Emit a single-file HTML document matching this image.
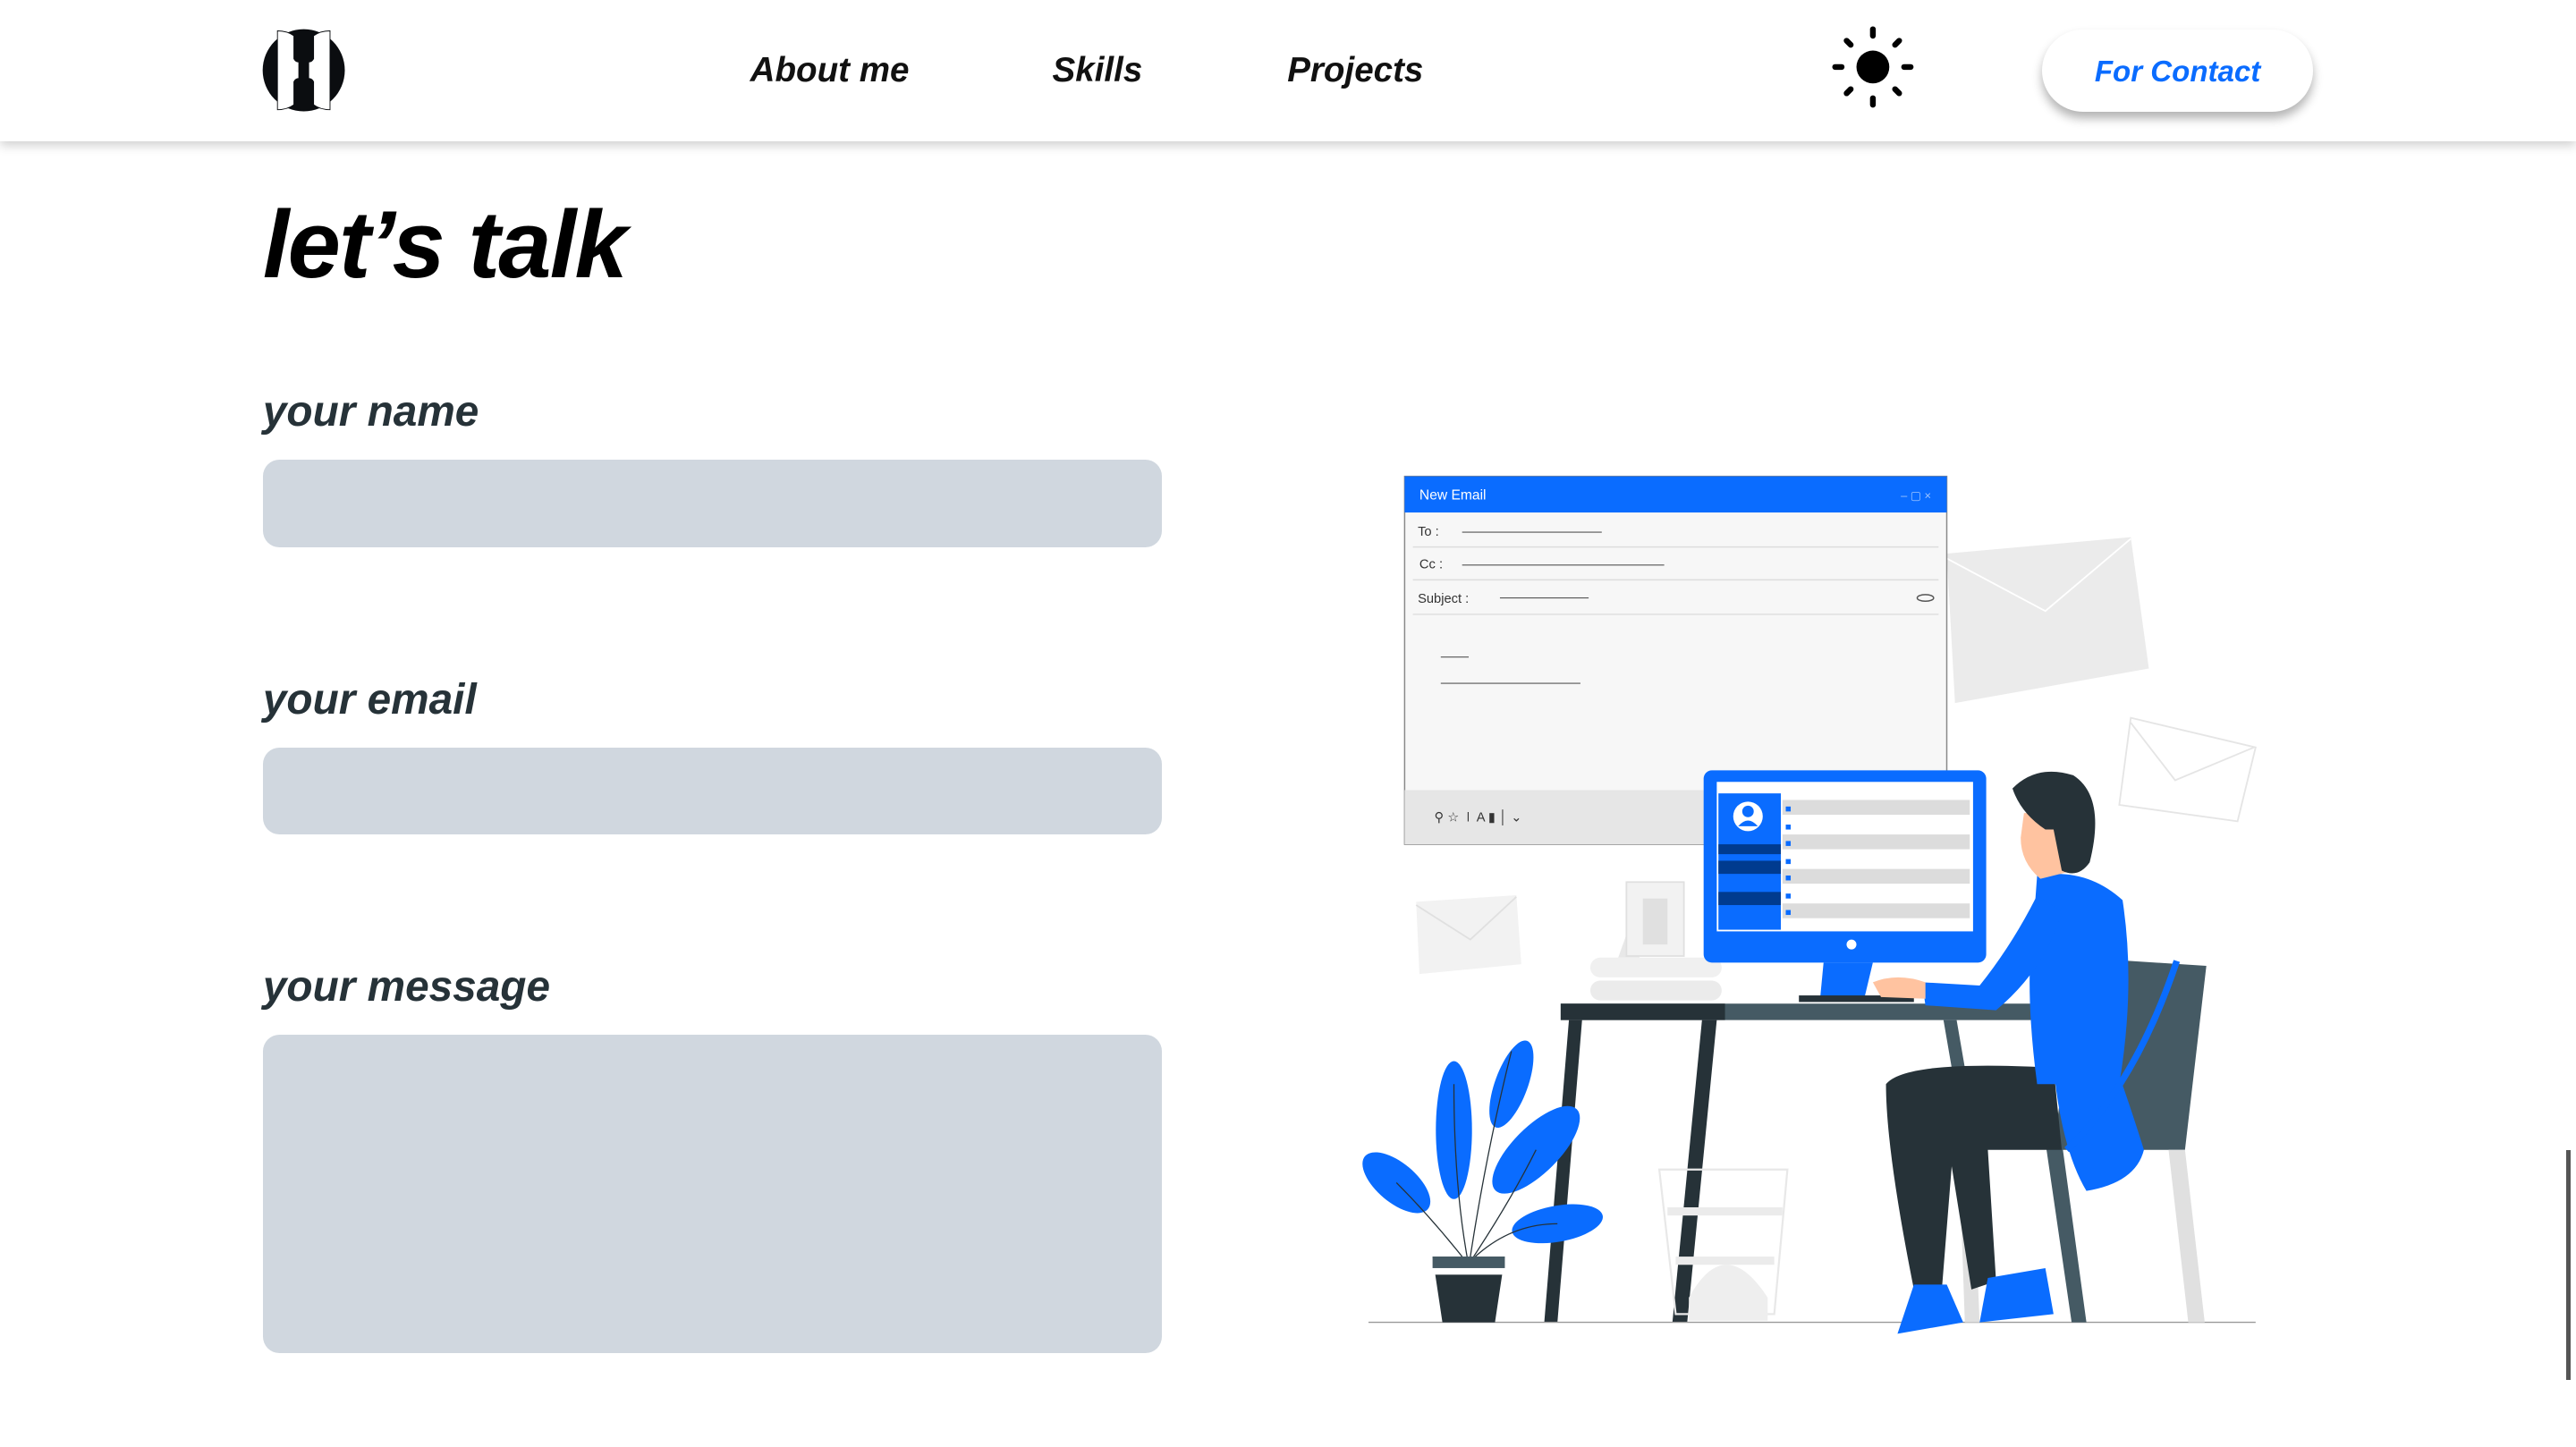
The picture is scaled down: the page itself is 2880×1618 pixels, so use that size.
<!DOCTYPE html>
<html><head><meta charset="utf-8">
<style>
html,body{margin:0;padding:0;background:#fff;overflow:hidden}
#w{zoom:1.83673;width:1568px;height:881px;position:relative;font-family:"Liberation Sans",sans-serif}
.hd{position:absolute;left:0;top:0;width:1568px;height:86px;background:#fff;box-shadow:0 3px 6px rgba(0,0,0,.18)}
.nav{position:absolute;top:31px;font-weight:bold;font-style:italic;font-size:21px;color:#111;transform:translateX(-50%)}
.btn{position:absolute;left:1243px;top:18px;width:165px;height:50px;border-radius:25px;background:#fff;box-shadow:0 4px 6px rgba(0,0,0,.3);color:#0a6cff;font-weight:bold;font-style:italic;font-size:18px;text-align:center;line-height:52px}
h1{position:absolute;left:160px;top:116px;margin:0;font-size:58px;font-weight:bold;font-style:italic;color:#000;letter-spacing:-1px}
.lb{position:absolute;left:160px;font-size:26px;font-weight:bold;font-style:italic;color:#263238}
.in{position:absolute;left:160px;width:547px;background:#d0d7df;border-radius:10px}
</style></head><body><div id="w">
<div class="hd"></div>
<svg style="position:absolute;left:158px;top:16px" width="54" height="54" viewBox="0 0 54 54">
<circle cx="27" cy="27" r="25" fill="#0b0d10"/>
<path d="M11 3 Q17 3 21 6 L21 20 Q22 22 24 22 L24 32 Q22 32 21 34 L21 48 Q17 51 11 51 Z" fill="#fff" stroke="#0b0d10" stroke-width="0.5"/>
<path d="M43 3 Q37 3 33 6 L33 20 Q32 22 30 22 L30 32 Q32 32 33 34 L33 48 Q37 51 43 51 Z" fill="#fff" stroke="#0b0d10" stroke-width="0.5"/>
</svg>
<div class="nav" style="left:505px">About me</div>
<div class="nav" style="left:668px">Skills</div>
<div class="nav" style="left:825px">Projects</div>
<svg style="position:absolute;left:1115px;top:16px" width="50" height="50" viewBox="0 0 50 50">
<circle cx="25" cy="25" r="10" fill="#000"/>
<g stroke="#000" stroke-width="3.5" stroke-linecap="round">
<line x1="25" y1="2" x2="25" y2="6"/><line x1="25" y1="44" x2="25" y2="48"/>
<line x1="2" y1="25" x2="6" y2="25"/><line x1="44" y1="25" x2="48" y2="25"/>
<line x1="9" y1="9" x2="11.5" y2="11.5"/><line x1="38.5" y1="38.5" x2="41" y2="41"/>
<line x1="41" y1="9" x2="38.5" y2="11.5"/><line x1="9" y1="41" x2="11.5" y2="38.5"/>
</g></svg>
<div class="btn">For Contact</div>
<h1>let’s talk</h1>
<div class="lb" style="top:236px">your name</div>
<div class="in" style="top:280px;height:53px"></div>
<div class="lb" style="top:411px">your email</div>
<div class="in" style="top:455px;height:53px"></div>
<div class="lb" style="top:586px">your message</div>
<div class="in" style="top:630px;height:194px"></div>
<div style="position:absolute;left:1562px;top:700px;width:3px;height:140px;background:#555"></div>

<svg style="position:absolute;left:0;top:0" width="1568" height="881" viewBox="0 0 1568 881">
<polygon points="1185,337 1297,327 1308,407 1190,428" fill="#ebebeb"/>
<polyline points="1185,340 1245,372 1297,328" fill="none" stroke="#fff" stroke-width="1"/>
<polygon points="1297,437 1373,455 1362,500 1290,490" fill="#fff" stroke="#e5e5e5"/>
<polyline points="1297,440 1324,475 1372,455" fill="none" stroke="#e5e5e5"/>
<polygon points="862,549 923,545 926,587 864,593" fill="#f2f2f2"/>
<polyline points="862,551 895,572 923,546" fill="none" stroke="#e0e0e0"/>
<rect x="855" y="290" width="330" height="224" fill="#f7f7f7" stroke="#888" stroke-width="0.8"/>
<rect x="855" y="290" width="330" height="22" fill="#0a6cff"/>
<text x="864" y="304" font-size="8.5" fill="#fff" font-family="Liberation Sans">New Email</text>
<text x="1157" y="304" font-size="7" fill="#9cc3ff" font-family="Liberation Sans">– ▢ ×</text>
<g font-size="8" fill="#333" font-family="Liberation Sans"><text x="863" y="326">To :</text><text x="864" y="346">Cc :</text><text x="863" y="367">Subject :</text></g>
<g stroke="#ddd" stroke-width="0.8"><line x1="860" y1="333" x2="1180" y2="333"/><line x1="860" y1="353" x2="1180" y2="353"/><line x1="860" y1="374" x2="1180" y2="374"/></g>
<g stroke="#555" stroke-width="0.6"><line x1="890" y1="324" x2="975" y2="324"/><line x1="890" y1="344" x2="1013" y2="344"/><line x1="913" y1="364" x2="967" y2="364"/><line x1="877" y1="400" x2="894" y2="400"/><line x1="877" y1="416" x2="962" y2="416"/></g>
<ellipse cx="1172" cy="364" rx="5" ry="2" fill="none" stroke="#555" stroke-width="0.8"/>
<rect x="855" y="481" width="330" height="33" fill="#e6e6e6"/>
<text x="873" y="500" font-size="8" fill="#333">⚲ ☆ 𝍷 A ▮ │ ⌄</text>
<rect x="968" y="583" width="80" height="12" rx="6" fill="#f0f0f0"/>
<rect x="968" y="597" width="80" height="12" rx="6" fill="#ebebeb"/>
<polygon points="985,583 995,555 998,583" fill="#e8e8e8"/>
<rect x="990" y="537" width="35" height="45" fill="#f2f2f2" stroke="#e0e0e0"/>
<rect x="1000" y="547" width="15" height="28" fill="#e0e0e0"/>
<rect x="1037" y="469" width="172" height="117" rx="5" fill="#0a6cff"/>
<rect x="1045" y="476" width="156" height="91" fill="#fff"/>
<rect x="1046" y="483" width="38" height="83" fill="#0a6cff"/>
<g fill="#003b8f"><rect x="1046" y="514" width="38" height="6"/><rect x="1046" y="524" width="38" height="8"/><rect x="1046" y="543" width="38" height="8"/></g>
<circle cx="1064" cy="497" r="9" fill="#fff"/><circle cx="1064" cy="494" r="3.5" fill="#0a6cff"/><path d="M1058 503 Q1064 496 1070 503Z" fill="#0a6cff"/>
<g fill="#dcdcdc"><rect x="1085" y="487" width="114" height="9"/><rect x="1085" y="508" width="114" height="9"/><rect x="1085" y="529" width="114" height="9"/><rect x="1085" y="550" width="114" height="9"/></g>
<g fill="#0a6cff"><rect x="1087" y="491" width="3" height="3"/><rect x="1087" y="502" width="3" height="3"/><rect x="1087" y="512" width="3" height="3"/><rect x="1087" y="523" width="3" height="3"/><rect x="1087" y="533" width="3" height="3"/><rect x="1087" y="544" width="3" height="3"/><rect x="1087" y="554" width="3" height="3"/></g>
<circle cx="1127" cy="575" r="3" fill="#fff"/>
<path d="M1110 586 L1140 586 L1135 607 L1108 607Z" fill="#0a6cff"/>
<rect x="1095" y="606" width="70" height="4" fill="#263238"/>
<rect x="950" y="611" width="290" height="10" fill="#455a64"/>
<rect x="950" y="611" width="100" height="10" fill="#263238"/>
<polygon points="955,621 963,621 948,805 940,805" fill="#263238"/>
<polygon points="1036,621 1045,621 1027,805 1018,805" fill="#263238"/>
<polygon points="1183,621 1191,621 1196,650 1188,650" fill="#455a64"/>
<polygon points="1010,712 1088,712 1080,800 1020,800" fill="none" stroke="#e8e8e8" stroke-width="1.2"/>
<rect x="1015" y="735" width="70" height="5" fill="#ebebeb"/><rect x="1020" y="765" width="60" height="5" fill="#ebebeb"/>
<path d="M1028 790 Q1050 750 1076 790 L1076 804 L1028 804Z" fill="#eeeeee"/>
<line x1="833" y1="805" x2="1373" y2="805" stroke="#999" stroke-width="0.8"/>
<g fill="#0a6cff">
<ellipse cx="885" cy="688" rx="11" ry="42"/>
<ellipse cx="920" cy="660" rx="10" ry="28" transform="rotate(20 920 660)"/>
<ellipse cx="935" cy="700" rx="14" ry="35" transform="rotate(45 935 700)"/>
<ellipse cx="850" cy="720" rx="12" ry="25" transform="rotate(-50 850 720)"/>
<ellipse cx="948" cy="745" rx="28" ry="11" transform="rotate(-10 948 745)"/>
</g>
<g stroke="#263238" stroke-width="0.7" fill="none"><path d="M893 765 Q885 720 885 660"/><path d="M895 765 Q905 700 920 640"/><path d="M897 765 Q920 730 935 700"/><path d="M890 765 Q870 740 850 720"/><path d="M898 765 Q920 745 948 745"/></g>
<polygon points="872,765 916,765 910,805 878,805" fill="#263238"/>
<rect x="872" y="765" width="44" height="7" fill="#455a64"/><rect x="873" y="772" width="42" height="4" fill="#fff"/>
<polygon points="1265,583 1343,588 1330,700 1250,700" fill="#455a64"/>
<polygon points="1320,700 1330,700 1342,805 1332,805" fill="#e0e0e0"/>
<polygon points="1190,685 1260,690 1260,700 1190,695" fill="#455a64"/>
<polygon points="1192,690 1200,690 1205,805 1196,805" fill="#e0e0e0"/>
<polygon points="1245,695 1255,695 1270,805 1261,805" fill="#455a64"/>
<path d="M1148 660 Q1160 645 1250 650 L1255 700 L1210 700 L1215 780 L1200 785 L1188 710 L1182 785 L1165 785 Q1148 700 1148 660Z" fill="#263238"/>
<path d="M1165 782 L1185 782 L1195 805 L1155 812Z" fill="#0a6cff"/>
<path d="M1210 778 L1245 772 L1250 800 L1205 805Z" fill="#0a6cff"/>
<path d="M1240 533 Q1270 528 1292 548 Q1300 600 1290 660 L1240 660 Q1232 600 1238 560Z" fill="#0a6cff"/>
<path d="M1240 545 Q1225 575 1205 600 L1170 598 L1172 612 L1215 615 Q1245 590 1255 555Z" fill="#0a6cff"/>
<path d="M1258 580 Q1280 620 1305 700 Q1300 720 1270 725 Q1255 700 1250 650Z" fill="#0a6cff"/>
<path d="M1325 585 Q1300 660 1258 700" fill="none" stroke="#0a6cff" stroke-width="4"/>
<path d="M1140 598 Q1155 592 1172 598 L1172 608 L1145 607Z" fill="#ffc3a0"/>
<path d="M1232 495 L1258 495 L1262 530 L1242 535 Q1230 525 1230 510Z" fill="#ffc3a0"/>
<path d="M1225 480 Q1240 465 1262 472 Q1282 485 1272 525 Q1265 535 1255 530 L1250 505 L1245 505 Q1230 495 1225 480Z" fill="#263238"/>
</svg>
</div></body></html>
